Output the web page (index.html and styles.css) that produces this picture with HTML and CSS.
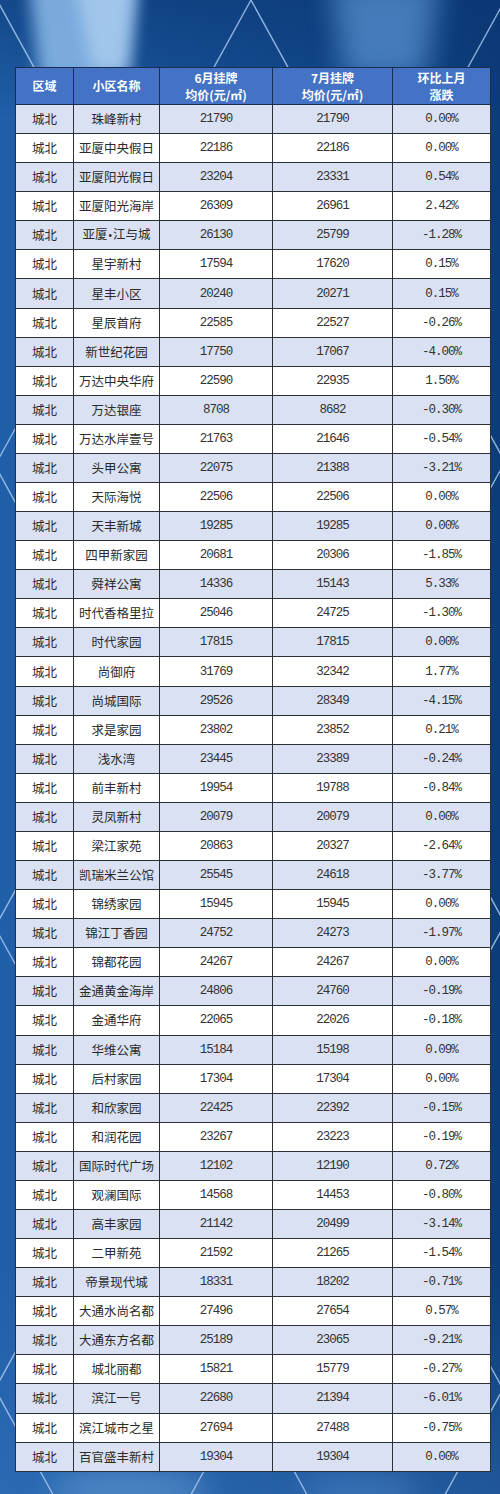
FILE: index.html
```html
<!DOCTYPE html>
<html lang="zh-CN">
<head>
<meta charset="utf-8">
<title>城北小区挂牌均价</title>
<link rel="stylesheet" href="styles.css">
</head>
<body>
<div class="page">
  <svg class="backdrop" width="500" height="1494" viewBox="0 0 500 1494" aria-hidden="true">
    <defs>
      <linearGradient id="base" x1="0" y1="0" x2="1" y2="0">
        <stop offset="0" stop-color="#1f60a8"/>
        <stop offset="0.5" stop-color="#154e93"/>
        <stop offset="1" stop-color="#0c3c79"/>
      </linearGradient>
      <linearGradient id="vshade" x1="0" y1="0" x2="0" y2="1">
        <stop offset="0" stop-color="#0a3470" stop-opacity="0.55"/>
        <stop offset="0.08" stop-color="#0a3470" stop-opacity="0"/>
        <stop offset="0.85" stop-color="#3a78c0" stop-opacity="0"/>
        <stop offset="1" stop-color="#3a78c0" stop-opacity="0.45"/>
      </linearGradient>
      <filter id="soft" x="-50%" y="-50%" width="200%" height="200%">
        <feGaussianBlur stdDeviation="8"/>
      </filter>
      <filter id="softer" x="-50%" y="-50%" width="200%" height="200%">
        <feGaussianBlur stdDeviation="14"/>
      </filter>
    </defs>
    <rect width="500" height="1494" fill="url(#base)"/>
    <rect width="500" height="1494" fill="url(#vshade)"/>
    <!-- top light beams -->
    <polygon points="28,-20 138,-20 128,80 40,80" fill="#86b5e5" opacity="0.9" filter="url(#soft)"/>
    <polygon points="75,-20 135,-20 126,70 92,70" fill="#b3d3f2" opacity="0.7" filter="url(#soft)"/>
    <polygon points="330,-20 440,-20 425,80 345,80" fill="#5890cf" opacity="0.75" filter="url(#softer)"/>
    <!-- bottom light patches -->
    <ellipse cx="130" cy="1490" rx="80" ry="22" fill="#6b9fd6" opacity="0.55" filter="url(#softer)"/>
    <ellipse cx="360" cy="1492" rx="60" ry="18" fill="#4f88c9" opacity="0.5" filter="url(#softer)"/>
    <!-- diamond lattice lines -->
    <g stroke="#a8c8ee" stroke-width="1.4" opacity="0.85" fill="none">
      <line x1="-769" y1="0" x2="52.7" y2="1494"/>
      <line x1="-515" y1="0" x2="306.7" y2="1494"/>
      <line x1="-261" y1="0" x2="560.7" y2="1494"/>
      <line x1="-3" y1="0" x2="818.7" y2="1494"/>
      <line x1="251" y1="0" x2="1072.7" y2="1494"/>
      <line x1="251" y1="0" x2="-570.7" y2="1494"/>
      <line x1="505" y1="0" x2="-316.7" y2="1494"/>
      <line x1="759" y1="0" x2="-62.7" y2="1494"/>
      <line x1="1013" y1="0" x2="191.3" y2="1494"/>
      <line x1="1267" y1="0" x2="445.3" y2="1494"/>
    </g>
  </svg>

  <table class="price-table">
    <colgroup>
      <col class="c-area">
      <col class="c-name">
      <col class="c-jun">
      <col class="c-jul">
      <col class="c-chg">
    </colgroup>
    <thead>
      <tr>
        <th>区域</th>
        <th>小区名称</th>
        <th><span class="hl">6月挂牌</span><span class="hl">均价(元/㎡)</span></th>
        <th><span class="hl">7月挂牌</span><span class="hl">均价(元/㎡)</span></th>
        <th><span class="hl">环比上月</span><span class="hl">涨跌</span></th>
      </tr>
    </thead>
    <tbody>
      <tr><td>城北</td><td>珠峰新村</td><td class="num">21790</td><td class="num">21790</td><td class="num">0.00%</td></tr>
      <tr><td>城北</td><td>亚厦中央假日</td><td class="num">22186</td><td class="num">22186</td><td class="num">0.00%</td></tr>
      <tr><td>城北</td><td>亚厦阳光假日</td><td class="num">23204</td><td class="num">23331</td><td class="num">0.54%</td></tr>
      <tr><td>城北</td><td>亚厦阳光海岸</td><td class="num">26309</td><td class="num">26961</td><td class="num">2.42%</td></tr>
      <tr><td>城北</td><td>亚厦<span class="dot">•</span>江与城</td><td class="num">26130</td><td class="num">25799</td><td class="num">-1.28%</td></tr>
      <tr><td>城北</td><td>星宇新村</td><td class="num">17594</td><td class="num">17620</td><td class="num">0.15%</td></tr>
      <tr><td>城北</td><td>星丰小区</td><td class="num">20240</td><td class="num">20271</td><td class="num">0.15%</td></tr>
      <tr><td>城北</td><td>星辰首府</td><td class="num">22585</td><td class="num">22527</td><td class="num">-0.26%</td></tr>
      <tr><td>城北</td><td>新世纪花园</td><td class="num">17750</td><td class="num">17067</td><td class="num">-4.00%</td></tr>
      <tr><td>城北</td><td>万达中央华府</td><td class="num">22590</td><td class="num">22935</td><td class="num">1.50%</td></tr>
      <tr><td>城北</td><td>万达银座</td><td class="num">8708</td><td class="num">8682</td><td class="num">-0.30%</td></tr>
      <tr><td>城北</td><td>万达水岸壹号</td><td class="num">21763</td><td class="num">21646</td><td class="num">-0.54%</td></tr>
      <tr><td>城北</td><td>头甲公寓</td><td class="num">22075</td><td class="num">21388</td><td class="num">-3.21%</td></tr>
      <tr><td>城北</td><td>天际海悦</td><td class="num">22506</td><td class="num">22506</td><td class="num">0.00%</td></tr>
      <tr><td>城北</td><td>天丰新城</td><td class="num">19285</td><td class="num">19285</td><td class="num">0.00%</td></tr>
      <tr><td>城北</td><td>四甲新家园</td><td class="num">20681</td><td class="num">20306</td><td class="num">-1.85%</td></tr>
      <tr><td>城北</td><td>舜祥公寓</td><td class="num">14336</td><td class="num">15143</td><td class="num">5.33%</td></tr>
      <tr><td>城北</td><td>时代香格里拉</td><td class="num">25046</td><td class="num">24725</td><td class="num">-1.30%</td></tr>
      <tr><td>城北</td><td>时代家园</td><td class="num">17815</td><td class="num">17815</td><td class="num">0.00%</td></tr>
      <tr><td>城北</td><td>尚御府</td><td class="num">31769</td><td class="num">32342</td><td class="num">1.77%</td></tr>
      <tr><td>城北</td><td>尚城国际</td><td class="num">29526</td><td class="num">28349</td><td class="num">-4.15%</td></tr>
      <tr><td>城北</td><td>求是家园</td><td class="num">23802</td><td class="num">23852</td><td class="num">0.21%</td></tr>
      <tr><td>城北</td><td>浅水湾</td><td class="num">23445</td><td class="num">23389</td><td class="num">-0.24%</td></tr>
      <tr><td>城北</td><td>前丰新村</td><td class="num">19954</td><td class="num">19788</td><td class="num">-0.84%</td></tr>
      <tr><td>城北</td><td>灵凤新村</td><td class="num">20079</td><td class="num">20079</td><td class="num">0.00%</td></tr>
      <tr><td>城北</td><td>梁江家苑</td><td class="num">20863</td><td class="num">20327</td><td class="num">-2.64%</td></tr>
      <tr><td>城北</td><td>凯瑞米兰公馆</td><td class="num">25545</td><td class="num">24618</td><td class="num">-3.77%</td></tr>
      <tr><td>城北</td><td>锦绣家园</td><td class="num">15945</td><td class="num">15945</td><td class="num">0.00%</td></tr>
      <tr><td>城北</td><td>锦江丁香园</td><td class="num">24752</td><td class="num">24273</td><td class="num">-1.97%</td></tr>
      <tr><td>城北</td><td>锦都花园</td><td class="num">24267</td><td class="num">24267</td><td class="num">0.00%</td></tr>
      <tr><td>城北</td><td>金通黄金海岸</td><td class="num">24806</td><td class="num">24760</td><td class="num">-0.19%</td></tr>
      <tr><td>城北</td><td>金通华府</td><td class="num">22065</td><td class="num">22026</td><td class="num">-0.18%</td></tr>
      <tr><td>城北</td><td>华维公寓</td><td class="num">15184</td><td class="num">15198</td><td class="num">0.09%</td></tr>
      <tr><td>城北</td><td>后村家园</td><td class="num">17304</td><td class="num">17304</td><td class="num">0.00%</td></tr>
      <tr><td>城北</td><td>和欣家园</td><td class="num">22425</td><td class="num">22392</td><td class="num">-0.15%</td></tr>
      <tr><td>城北</td><td>和润花园</td><td class="num">23267</td><td class="num">23223</td><td class="num">-0.19%</td></tr>
      <tr><td>城北</td><td>国际时代广场</td><td class="num">12102</td><td class="num">12190</td><td class="num">0.72%</td></tr>
      <tr><td>城北</td><td>观澜国际</td><td class="num">14568</td><td class="num">14453</td><td class="num">-0.80%</td></tr>
      <tr><td>城北</td><td>高丰家园</td><td class="num">21142</td><td class="num">20499</td><td class="num">-3.14%</td></tr>
      <tr><td>城北</td><td>二甲新苑</td><td class="num">21592</td><td class="num">21265</td><td class="num">-1.54%</td></tr>
      <tr><td>城北</td><td>帝景现代城</td><td class="num">18331</td><td class="num">18202</td><td class="num">-0.71%</td></tr>
      <tr><td>城北</td><td>大通水尚名都</td><td class="num">27496</td><td class="num">27654</td><td class="num">0.57%</td></tr>
      <tr><td>城北</td><td>大通东方名都</td><td class="num">25189</td><td class="num">23065</td><td class="num">-9.21%</td></tr>
      <tr><td>城北</td><td>城北丽都</td><td class="num">15821</td><td class="num">15779</td><td class="num">-0.27%</td></tr>
      <tr><td>城北</td><td>滨江一号</td><td class="num">22680</td><td class="num">21394</td><td class="num">-6.01%</td></tr>
      <tr><td>城北</td><td>滨江城市之星</td><td class="num">27694</td><td class="num">27488</td><td class="num">-0.75%</td></tr>
      <tr><td>城北</td><td>百官盛丰新村</td><td class="num">19304</td><td class="num">19304</td><td class="num">0.00%</td></tr>
    </tbody>
  </table>
</div>
</body>
</html>
```

FILE: styles.css
```css
html, body {
  margin: 0;
  padding: 0;
  background: #134c8e;
}

.page {
  position: relative;
  width: 500px;
  height: 1494px;
  box-sizing: border-box;
  padding: 67px 10px 0 15px;
  overflow: hidden;
}

.backdrop {
  position: absolute;
  left: 0;
  top: 0;
  z-index: 0;
  display: block;
}

.price-table {
  position: relative;
  z-index: 1;
  width: 475px;
  table-layout: fixed;
  border-collapse: collapse;
  border: 1.5px solid #1b2c4e;
  font-family: "Noto Sans CJK SC", "Noto Sans", sans-serif;
  font-size: 12.5px;
  color: #2a2a2a;
}

.c-area { width: 58px; }
.c-name { width: 86px; }
.c-jun  { width: 113px; }
.c-jul  { width: 120px; }
.c-chg  { width: 98px; }

.price-table th,
.price-table td {
  padding: 0;
  text-align: center;
  vertical-align: middle;
  white-space: nowrap;
  overflow: hidden;
}

.price-table thead tr {
  height: 37px;
}

.price-table th {
  background: #4472c4;
  color: #ffffff;
  font-weight: 700;
  font-size: 12px;
  line-height: 17.5px;
  border: 1.5px solid #1b2c4e;
}

.hl {
  display: block;
  line-height: 17.5px;
}

.price-table tbody tr {
  height: 29.08px;
}

.price-table td {
  border: 1px solid #2b2f36;
  line-height: 18px;
  background: #ffffff;
}

.price-table tbody tr:nth-child(odd) td {
  background: #d9e1f2;
}

.price-table td.num {
  font-family: "Liberation Mono", "DejaVu Sans Mono", monospace;
  font-size: 12.5px;
  letter-spacing: -1px;
  color: #333333;
}

.dot {
  font-family: "Liberation Sans", sans-serif;
  font-size: 10px;
  padding: 0 1px;
}
```
